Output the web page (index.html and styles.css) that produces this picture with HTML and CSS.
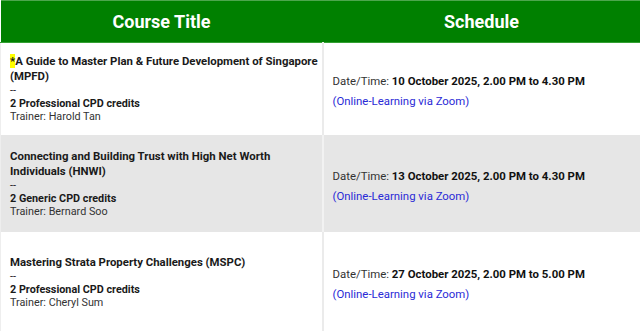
FILE: index.html
```html
<!DOCTYPE html>
<html>
<head>
<meta charset="utf-8">
<link rel="stylesheet" href="styles.css">
</head>
<body>
<table class="schedule">
  <thead>
    <tr>
      <th class="col-title">Course Title</th>
      <th class="col-sched">Schedule</th>
    </tr>
  </thead>
  <tbody>
    <tr class="row row-1">
      <td class="course">
        <div class="name"><span class="mark">*</span>A Guide to Master Plan &amp; Future Development of Singapore (MPFD)</div>
        <div class="dash">--</div>
        <div class="credits">2 Professional CPD credits</div>
        <div class="trainer">Trainer: Harold Tan</div>
      </td>
      <td class="when">
        <div class="date">Date/Time: <b>10 October 2025, 2.00 PM to 4.30 PM</b></div>
        <div class="mode">(Online-Learning via Zoom)</div>
      </td>
    </tr>
    <tr class="row row-2 alt">
      <td class="course">
        <div class="name">Connecting and Building Trust with High Net Worth Individuals (HNWI)</div>
        <div class="dash">--</div>
        <div class="credits">2 Generic CPD credits</div>
        <div class="trainer">Trainer: Bernard Soo</div>
      </td>
      <td class="when">
        <div class="date">Date/Time: <b>13 October 2025, 2.00 PM to 4.30 PM</b></div>
        <div class="mode">(Online-Learning via Zoom)</div>
      </td>
    </tr>
    <tr class="row row-3">
      <td class="course">
        <div class="name">Mastering Strata Property Challenges (MSPC)</div>
        <div class="dash">--</div>
        <div class="credits">2 Professional CPD credits</div>
        <div class="trainer">Trainer: Cheryl Sum</div>
      </td>
      <td class="when">
        <div class="date">Date/Time: <b>27 October 2025, 2.00 PM to 5.00 PM</b></div>
        <div class="mode">(Online-Learning via Zoom)</div>
      </td>
    </tr>
  </tbody>
</table>
</body>
</html>
```
FILE: styles.css
```css
html, body {
  margin: 0;
  padding: 0;
  background: #ffffff;
}
body {
  font-family: Roboto, "Liberation Sans", Arial, sans-serif;
  color: #1a1a1a;
}
.schedule {
  width: 640px;
  border-collapse: collapse;
  table-layout: fixed;
}
.schedule th {
  background: #008000;
  color: #ffffff;
  font-size: 18px;
  font-weight: 700;
  height: 41px;
  padding: 0;
  text-align: center;
  vertical-align: middle;
  border-top: 1px solid #4da64d;
  border-bottom: 1px solid #33a033;
}
.col-title { width: 322px; }
.col-sched { width: 318px; }
.schedule td {
  vertical-align: middle;
  padding: 0 8px 0 9px;
}
.schedule td.course {
  border-left: 1px solid #eeeeee;
  padding-right: 1px;
}
.schedule td.when {
  border-left: 2px solid #ebebeb;
  padding-top: 5px;
}
.row-1 { height: 92px; }
.row-2 { height: 97px; }
.row-3 { height: 100px; }
.alt td { background: #e6e6e6; }
.alt td.when { border-left-color: #f2f2f2; }
.course {
  font-size: 10.8px;
  line-height: 13px;
}
.name {
  font-size: 11.4px;
  font-weight: 700;
  line-height: 15px;
}
.dash { font-weight: 400; }
.credits { font-weight: 700; }
.trainer { color: #333333; }
.mark { background: #ffff00; }
.when {
  font-size: 11.4px;
  line-height: 20px;
}
.date { color: #333333; }
.date b { color: #111111; font-weight: 700; }
.mode { color: #2a2ad6; }
```
